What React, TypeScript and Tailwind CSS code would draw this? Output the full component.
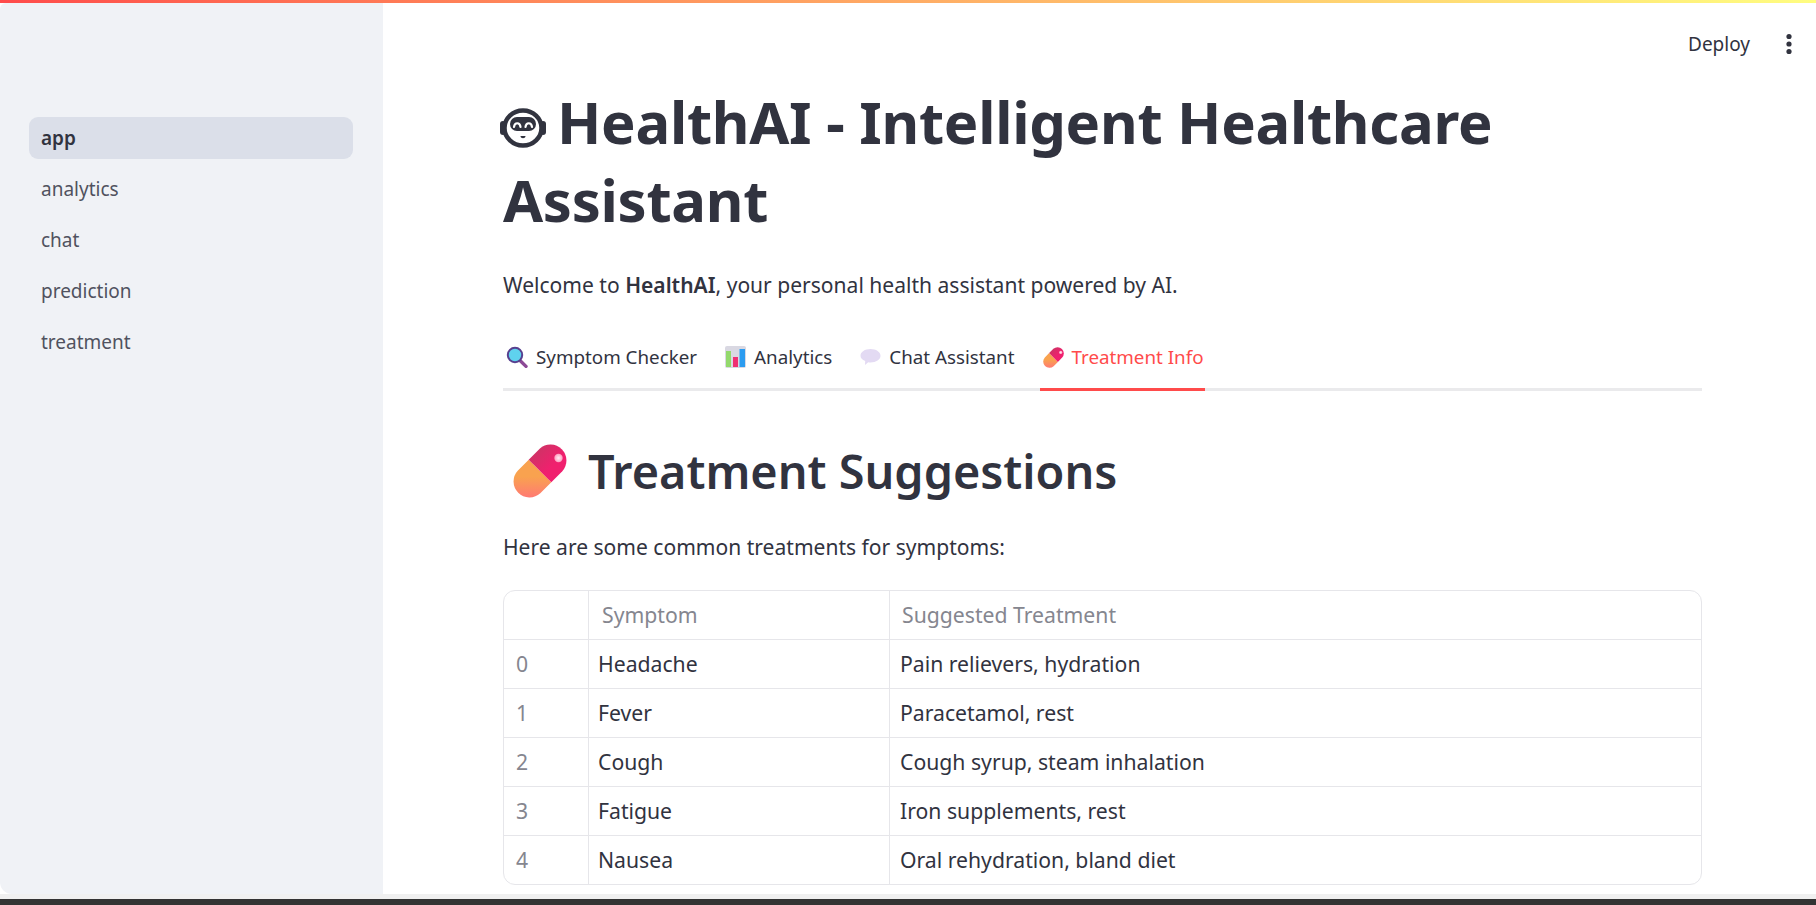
const font = "font-['Noto_Sans','Liberation_Sans',sans-serif]"

const navItems = ["app", "analytics", "chat", "prediction", "treatment"]

const rows = [
  ["0", "Headache", "Pain relievers, hydration"],
  ["1", "Fever", "Paracetamol, rest"],
  ["2", "Cough", "Cough syrup, steam inhalation"],
  ["3", "Fatigue", "Iron supplements, rest"],
  ["4", "Nausea", "Oral rehydration, bland diet"],
]

function RobotFace() {
  return (
    <svg width="46" height="40" viewBox="0 0 46 40" className="shrink-0">
      <rect x="0" y="13" width="6" height="14" rx="3" fill="#31333f" />
      <rect x="40" y="13" width="6" height="14" rx="3" fill="#31333f" />
      <ellipse cx="23" cy="20" rx="18.500" ry="17.500" fill="#fff" stroke="#31333f" strokeWidth="4.500" />
      <rect x="10" y="9" width="26" height="14" rx="7" fill="#31333f" />
      <path d="M14 19c.5-5 6-5 6.500 0M25.500 19c.5-5 6-5 6.500 0" fill="none" stroke="#fff" strokeWidth="2.200" strokeLinecap="round" />
      <path d="M20.500 28h5c0 3-5 3-5 0z" fill="#31333f" />
    </svg>
  )
}

function PillIcon({ size }: { size: number }) {
  const id = `pill${size}`
  return (
    <svg width={size} height={size} viewBox="0 0 54 54" className="shrink-0">
      <defs>
        <linearGradient id={`${id}o`} x1="0" y1="0" x2="0" y2="1">
          <stop offset="0.45" stopColor="#f9a24f" />
          <stop offset="1" stopColor="#ff7a73" />
        </linearGradient>
        <linearGradient id={`${id}p`} x1="0" y1="0" x2="1" y2="1">
          <stop offset="0" stopColor="#c23a62" />
          <stop offset="0.6" stopColor="#f0206e" />
        </linearGradient>
        <radialGradient id={`${id}h`}>
          <stop offset="0" stopColor="#fff0f5" />
          <stop offset="1" stopColor="#ff9dbf" />
        </radialGradient>
      </defs>
      <path d="M15.700 15.700 4.700 26.700A16 16 0 0 0 27.300 49.300L38.300 38.300z" fill={`url(#${id}o)`} />
      <path d="M15.700 15.700 26.700 4.700A16 16 0 0 1 49.300 27.300L38.300 38.300z" fill={`url(#${id}p)`} />
      <circle cx="45.500" cy="14" r="4.200" fill={`url(#${id}h)`} />
    </svg>
  )
}

function SearchIcon() {
  return (
    <svg width="22" height="22" viewBox="0 0 22 22" className="shrink-0">
      <path d="M14 14.500 20 20.400" stroke="#8c4a96" strokeWidth="3.400" strokeLinecap="round" />
      <circle cx="9" cy="9" r="7.200" fill="#5fd2ee" stroke="#57408f" strokeWidth="2" />
    </svg>
  )
}

function ChartIcon() {
  return (
    <svg width="21" height="22" viewBox="0 0 21 22" className="shrink-0">
      <rect x="0" y="0" width="21" height="22" rx="2" fill="#d9d8e2" />
      <rect x="1" y="5" width="5" height="16" fill="#93d96c" />
      <rect x="8" y="11" width="5" height="10" fill="#ef2f73" />
      <rect x="14.500" y="3" width="5.500" height="18" fill="#2c9cf0" />
    </svg>
  )
}

function BubbleIcon() {
  return (
    <svg width="21" height="20" viewBox="0 0 21 20" className="shrink-0">
      <path d="M10.500 2c5.600 0 10 2.900 10 6.700s-4.400 6.700-10 6.700c-.8 0-1.600-.1-2.300-.2L5 18l.2-3.900C2.200 12.900.5 11 .5 8.700.5 4.900 4.900 2 10.500 2z" fill="#e3daf3" />
    </svg>
  )
}

function Tab({ icon, label, active }: { icon: React.ReactNode; label: string; active?: boolean }) {
  return (
    <div className={`-mb-[3px] flex h-[60px] items-center gap-[8px] border-b-[3px] pb-[5px] pl-[3px] pr-[1px] ${active ? "border-[#ff4b4b] text-[#ff4b4b]" : "border-transparent text-[#31333f]"}`}>
      {icon}
      <span className="text-[18.800px]">{label}</span>
    </div>
  )
}

export default function App() {
  return (
    <div className={`${font} flex h-[905px] w-[1816px] flex-col overflow-hidden bg-white text-[#31333f]`}>
      <div className="h-[3px] shrink-0 bg-gradient-to-r from-[#ff4b4b] to-[#fffd80]" />
      <div className="flex min-h-0 flex-1">
        <aside className="flex w-[383px] shrink-0 flex-col gap-[9px] rounded-bl-[12px] rounded-tl-[6px] bg-[#f0f2f6] px-[29px] pt-[114px]">
          {navItems.map((item, i) => (
            <div
              key={item}
              className={`flex h-[42px] w-[324px] items-center rounded-[9px] px-[12px] text-[19px] ${i === 0 ? "bg-[#dbdfe9] font-semibold text-[#31333f]" : "text-[#50525f]"}`}
            >
              {item}
            </div>
          ))}
        </aside>
        <main className="flex min-w-0 flex-1 flex-col pl-[120px] pr-[114px]">
          <div className="mr-[-114px] flex h-[80px] shrink-0 items-center justify-end gap-[36px] pr-[24px] pt-[2px]">
            <span className="text-[19px]">Deploy</span>
            <svg width="6" height="22" viewBox="0 0 6 22">
              <circle cx="3" cy="3.500" r="2.600" fill="#31333f" />
              <circle cx="3" cy="11" r="2.600" fill="#31333f" />
              <circle cx="3" cy="18.500" r="2.600" fill="#31333f" />
            </svg>
          </div>
          <h1 className="text-[58px] font-bold leading-[78px] tracking-[-0.28px]">
            <span className="-ml-[3px] mr-[11px] inline-block align-[-4px]"><RobotFace /></span>HealthAI - Intelligent Healthcare Assistant
          </h1>
          <p className="mt-[30px] text-[21.060px] leading-[32px]">
            Welcome to <strong className="font-semibold">HealthAI</strong>, your personal health assistant powered by AI.
          </p>
          <div className="mt-[30px] flex gap-[24px] border-b-[3px] border-[#eaeaec]">
            <Tab icon={<SearchIcon />} label="Symptom Checker" />
            <Tab icon={<ChartIcon />} label="Analytics" />
            <Tab icon={<BubbleIcon />} label="Chat Assistant" />
            <Tab icon={<PillIcon size={21} />} label="Treatment Info" active />
          </div>
          <h2 className="mt-[45px] flex items-center gap-[21px] pl-[10px] text-[46.800px] font-semibold leading-[70px]">
            <PillIcon size={54} />
            Treatment Suggestions
          </h2>
          <p className="mt-[25px] text-[21.060px] leading-[32px]">Here are some common treatments for symptoms:</p>
          <table className="mt-[27px] w-full border-separate border-spacing-0 overflow-hidden rounded-[12px] border border-[#e6e6ea] text-[21.200px]">
            <thead>
              <tr className="h-[49px] text-[#85868f]">
                <th className="w-[85px] border-b border-r border-[#e6e6ea] font-normal" />
                <th className="w-[301px] border-b border-r border-[#e6e6ea] pl-[13px] text-left font-normal">Symptom</th>
                <th className="border-b border-[#e6e6ea] pl-[12px] text-left font-normal">Suggested Treatment</th>
              </tr>
            </thead>
            <tbody>
              {rows.map((row, i) => (
                <tr key={row[0]} className={i < 4 ? "h-[49px]" : "h-[48px]"}>
                  <td className={`border-r border-[#e6e6ea] pl-[12px] text-[#85868f] ${i < 4 ? "border-b" : ""}`}>{row[0]}</td>
                  <td className={`border-r border-[#e6e6ea] pl-[9px] ${i < 4 ? "border-b" : ""}`}>{row[1]}</td>
                  <td className={`border-[#e6e6ea] pl-[10px] ${i < 4 ? "border-b" : ""}`}>{row[2]}</td>
                </tr>
              ))}
            </tbody>
          </table>
        </main>
      </div>
      <div className="h-[5px] shrink-0 bg-[#f0f0f0]" />
      <div className="h-[6px] shrink-0 bg-[#333333]" />
    </div>
  )
}
